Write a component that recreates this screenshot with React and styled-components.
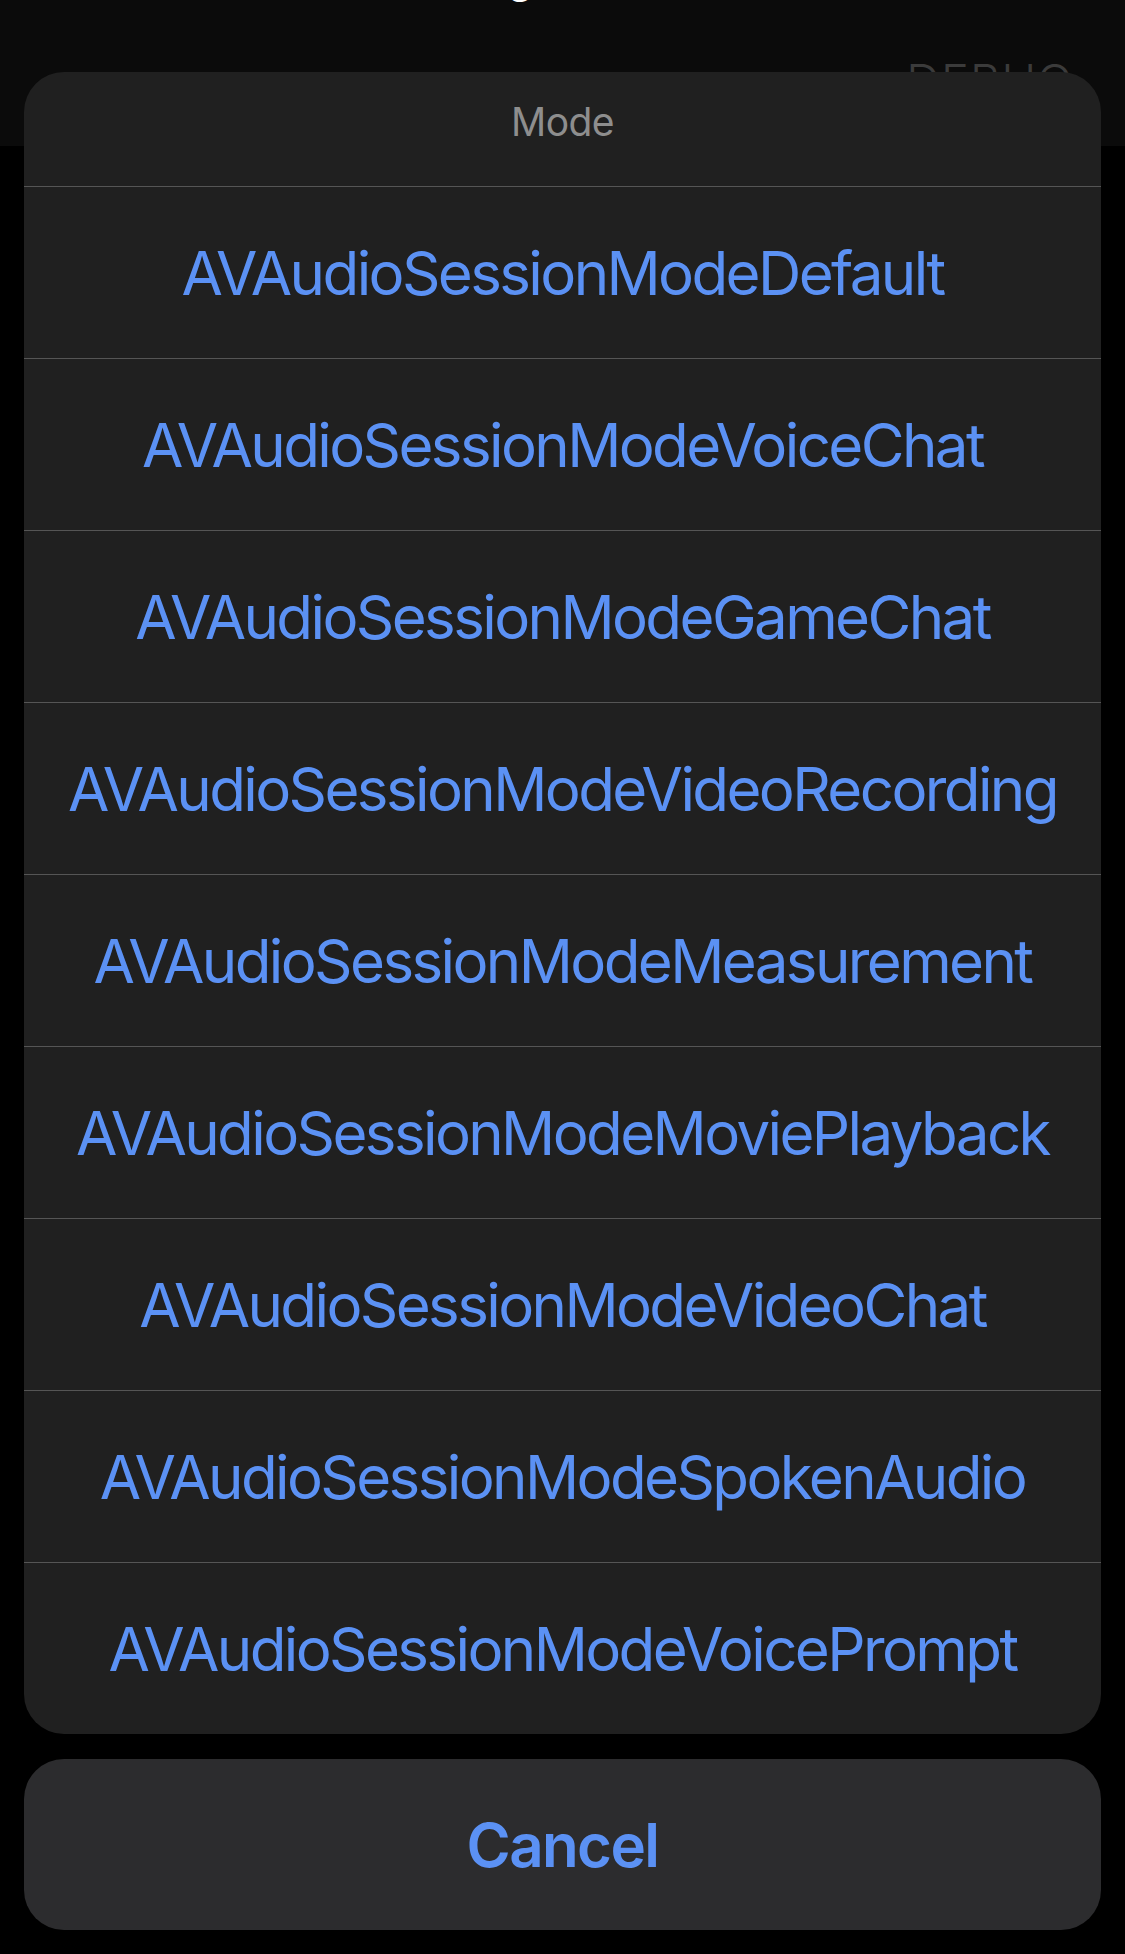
import React from 'react'
import styled, { createGlobalStyle } from 'styled-components'

const modes = [
    'AVAudioSessionModeDefault',
    'AVAudioSessionModeVoiceChat',
    'AVAudioSessionModeGameChat',
    'AVAudioSessionModeVideoRecording',
    'AVAudioSessionModeMeasurement',
    'AVAudioSessionModeMoviePlayback',
    'AVAudioSessionModeVideoChat',
    'AVAudioSessionModeSpokenAudio',
    'AVAudioSessionModeVoicePrompt',
]

const App = () => {
    return (
        <>
            <GlobalStyle />
            <Screen>
                <NavBar>
                    <NavTitle>Audio Session Settings</NavTitle>
                    <DebugLabel>DEBUG</DebugLabel>
                </NavBar>

                <SheetWrap>
                    <Group>
                        <Header>Mode</Header>
                        {modes.map((m) => (
                            <Action key={m}>{m}</Action>
                        ))}
                    </Group>
                    <CancelButton>Cancel</CancelButton>
                </SheetWrap>
            </Screen>
        </>
    )
}

export default App

const GlobalStyle = createGlobalStyle`
    html, body {
        margin: 0;
        padding: 0;
        background: #000;
    }
    body {
        font-family: Inter, "Noto Sans", sans-serif;
        -webkit-font-smoothing: antialiased;
    }
`
const Screen = styled.div`
    position: relative;
    width: 1125px;
    height: 1954px;
    background: #000;
    overflow: hidden;
`
const NavBar = styled.div`
    height: 146px;
    background: #0b0b0b;
    display: flex;
    justify-content: space-between;
    align-items: flex-start;
    padding: 0 52px 0 100px;
    box-sizing: border-box;
`
const NavTitle = styled.div`
    margin-top: -47px;
    color: #fff;
    font-size: 42px;
    line-height: 50px;
`
const DebugLabel = styled.div`
    margin-top: 52px;
    color: #3b3b3b;
    font-size: 47px;
    font-weight: 300;
    letter-spacing: 1px;
`
const SheetWrap = styled.div`
    position: absolute;
    left: 24px;
    right: 24px;
    bottom: 24px;
    display: flex;
    flex-direction: column;
    gap: 25px;
`
const Group = styled.div`
    background: #202020;
    border-radius: 40px;
    overflow: hidden;
    display: flex;
    flex-direction: column;
`
const Header = styled.div`
    height: 114px;
    box-sizing: border-box;
    padding-bottom: 16px;
    display: flex;
    align-items: center;
    justify-content: center;
    color: #8e8e8e;
    font-size: 39px;
    letter-spacing: -0.6px;
`
const Action = styled.div`
    height: 171px;
    border-top: 1px solid #555;
    display: flex;
    align-items: center;
    justify-content: center;
    color: #5b91f4;
    font-size: 60px;
    letter-spacing: -2.6px;
`
const CancelButton = styled.div`
    height: 171px;
    background: #2c2c2e;
    border-radius: 40px;
    display: flex;
    align-items: center;
    justify-content: center;
    color: #5b91f4;
    font-size: 60px;
    font-weight: 600;
    letter-spacing: -1.6px;
`
